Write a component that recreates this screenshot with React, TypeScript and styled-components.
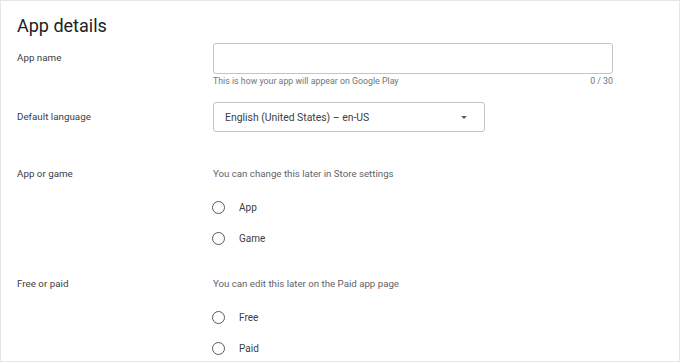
import React, { useState } from "react";
import styled, { createGlobalStyle } from "styled-components";

const GlobalStyle = createGlobalStyle`
  html, body {
    margin: 0;
    padding: 0;
    background: #fff;
  }
  * {
    box-sizing: border-box;
  }
`;

const Card = styled.div`
  width: 680px;
  height: 362px;
  border: 1px solid #e6e6e6;
  background: #fff;
  padding: 13px 16px 0 16px;
  font-family: Roboto, "Liberation Sans", Arial, sans-serif;
  color: #3c4043;
  overflow: hidden;
`;

const Title = styled.h1`
  margin: 0;
  font-size: 18px;
  line-height: 24px;
  font-weight: 400;
  color: #202124;
`;

const Section = styled.div<{ $gap: number }>`
  display: grid;
  grid-template-columns: 196px 400px;
  margin-top: ${(p) => p.$gap}px;
`;

const Label = styled.div<{ $tall?: boolean }>`
  font-size: 9.8px;
  line-height: ${(p) => (p.$tall ? "30px" : "16px")};
  color: #3c4043;
`;

const Field = styled.div`
  display: flex;
  flex-direction: column;
`;

const TextInput = styled.input`
  width: 400px;
  height: 31px;
  border: 1px solid #c4c4c4;
  border-radius: 3px;
  padding: 0 11px;
  font-family: inherit;
  font-size: 10.5px;
  color: #202124;
  outline: none;
`;

const HelperRow = styled.div`
  display: flex;
  justify-content: space-between;
  margin-top: 1px;
  font-size: 8.8px;
  line-height: 12px;
  color: #70757a;
`;

const SelectBox = styled.button`
  width: 272px;
  height: 30px;
  border: 1px solid #c4c4c4;
  border-radius: 3px;
  background: #fff;
  display: flex;
  align-items: center;
  justify-content: space-between;
  padding: 0 17px 0 11px;
  font-family: inherit;
  font-size: 10.4px;
  color: #3c4043;
  cursor: pointer;
`;

const Caret = styled.span`
  width: 0;
  height: 0;
  border-left: 3.5px solid transparent;
  border-right: 3.5px solid transparent;
  border-top: 3.5px solid #5f6368;
`;

const Hint = styled.div`
  font-size: 9.7px;
  line-height: 16px;
  color: #5f6368;
`;

const RadioList = styled.div`
  display: flex;
  flex-direction: column;
  margin-top: 10px;
`;

const RadioRow = styled.label`
  display: flex;
  align-items: center;
  height: 31px;
  font-size: 10px;
  color: #3c4043;
  cursor: pointer;
`;

const Circle = styled.span<{ $on: boolean }>`
  width: 13px;
  height: 13px;
  margin-left: -1px;
  border-radius: 50%;
  border: 1.5px solid #55595e;
  margin-right: 14px;
  display: flex;
  align-items: center;
  justify-content: center;
  &::after {
    content: "";
    width: 5px;
    height: 5px;
    border-radius: 50%;
    background: ${(p) => (p.$on ? "#01875f" : "transparent")};
  }
`;

function RadioGroup({ options }: { options: string[] }) {
  const [value, setValue] = useState("");
  return (
    <RadioList>
      {options.map((o) => (
        <RadioRow key={o} onClick={() => setValue(o)}>
          <Circle $on={value === o} />
          {o}
        </RadioRow>
      ))}
    </RadioList>
  );
}

export default function App() {
  const [name, setName] = useState("");
  return (
    <>
      <GlobalStyle />
      <Card>
        <Title>App details</Title>
        <Section $gap={5}>
          <Label $tall>App name</Label>
          <Field>
            <TextInput value={name} maxLength={30} onChange={(e) => setName(e.target.value)} />
            <HelperRow>
              <span>This is how your app will appear on Google Play</span>
              <span>{name.length} / 30</span>
            </HelperRow>
          </Field>
        </Section>
        <Section $gap={15}>
          <Label $tall>Default language</Label>
          <Field>
            <SelectBox>
              <span>English (United States) – en-US</span>
              <Caret />
            </SelectBox>
          </Field>
        </Section>
        <Section $gap={34}>
          <Label>App or game</Label>
          <Field>
            <Hint>You can change this later in Store settings</Hint>
            <RadioGroup options={["App", "Game"]} />
          </Field>
        </Section>
        <Section $gap={22}>
          <Label>Free or paid</Label>
          <Field>
            <Hint>You can edit this later on the Paid app page</Hint>
            <RadioGroup options={["Free", "Paid"]} />
          </Field>
        </Section>
      </Card>
    </>
  );
}
